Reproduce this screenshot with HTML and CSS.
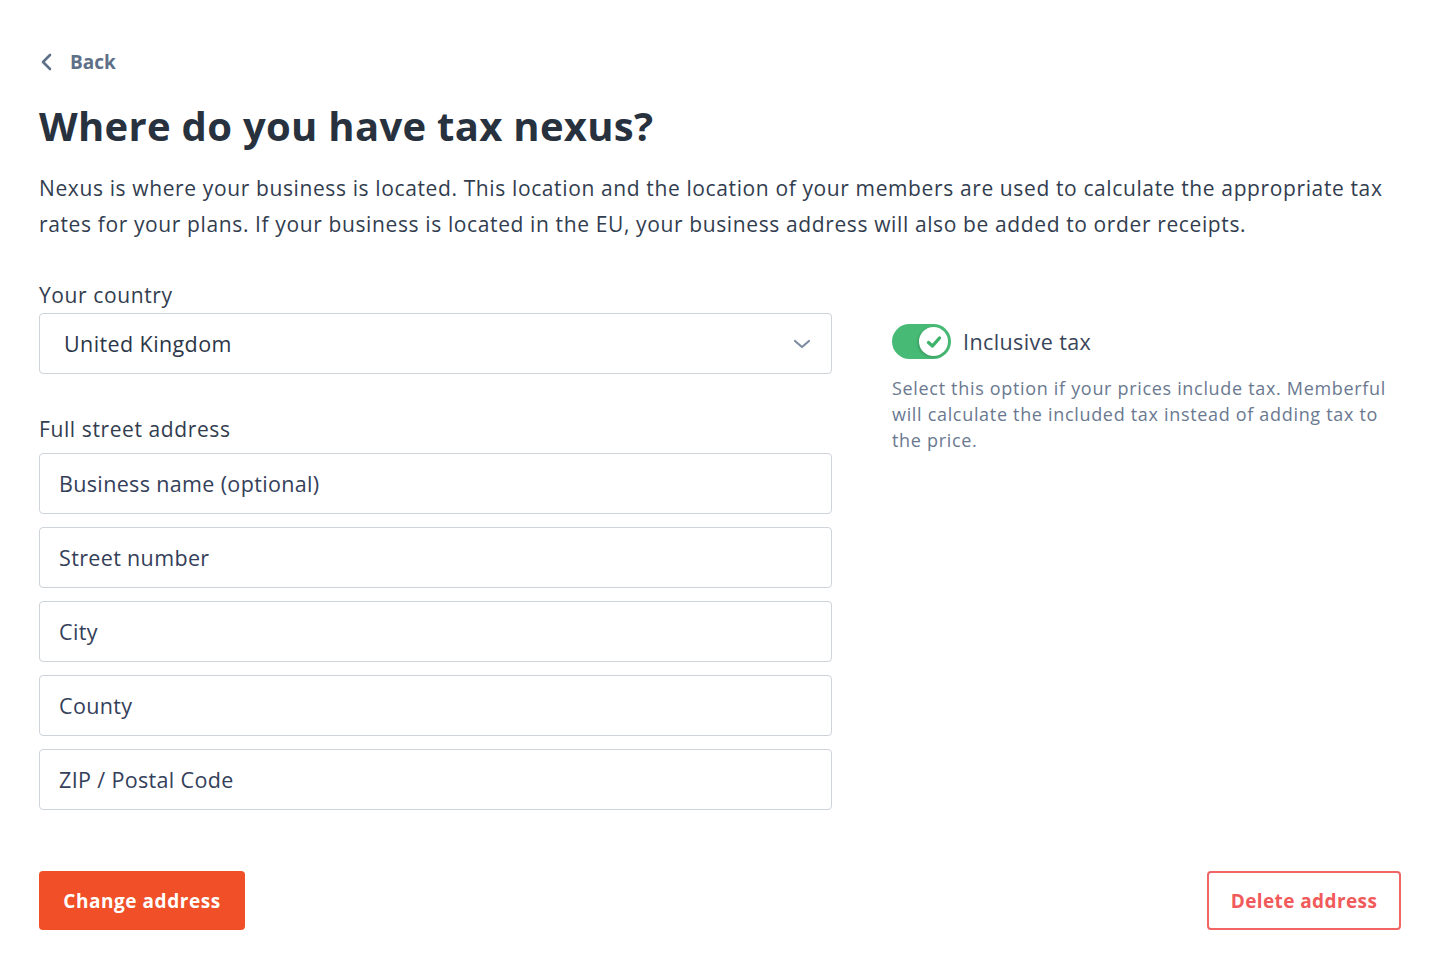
FILE: index.html
```html
<!DOCTYPE html>
<html lang="en">
<head>
<meta charset="utf-8">
<title>Tax nexus</title>
<link rel="stylesheet" href="styles.css">
</head>
<body>
<main class="page">
  <a class="back" href="#">
    <svg class="back-icon" width="14" height="18" viewBox="0 0 14 18"><path d="M10 2 L3 9 L10 16" fill="none" stroke="currentColor" stroke-width="2.6" stroke-linecap="round" stroke-linejoin="round"/></svg>
    <span>Back</span>
  </a>
  <h1 class="title">Where do you have tax nexus?</h1>
  <p class="intro">Nexus is where your business is located. This location and the location of your members are used to calculate the appropriate tax rates for your plans. If your business is located in the EU, your business address will also be added to order receipts.</p>

  <div class="columns">
    <div class="form-col">
      <label class="label">Your country</label>
      <div class="select">
        <span>United Kingdom</span>
        <svg class="chev" width="18" height="12" viewBox="0 0 18 12"><path d="M2 3 L9 9 L16 3" fill="none" stroke="currentColor" stroke-width="2.2" stroke-linecap="round" stroke-linejoin="round"/></svg>
      </div>
      <label class="label label-address">Full street address</label>
      <div class="inputs">
        <div class="input">Business name (optional)</div>
        <div class="input">Street number</div>
        <div class="input">City</div>
        <div class="input">County</div>
        <div class="input">ZIP / Postal Code</div>
      </div>
    </div>
    <div class="side-col">
      <div class="toggle-row">
        <span class="toggle">
          <span class="knob">
            <svg width="18" height="16" viewBox="0 0 18 16"><path d="M3.5 8.5 L7.5 12 L14.5 4" fill="none" stroke="currentColor" stroke-width="3.4" stroke-linecap="round" stroke-linejoin="round"/></svg>
          </span>
        </span>
        <span class="toggle-label">Inclusive tax</span>
      </div>
      <p class="help">Select this option if your prices include tax. Memberful will calculate the included tax instead of adding tax to the price.</p>
    </div>
  </div>

  <div class="actions">
    <button class="btn btn-primary">Change address</button>
    <button class="btn btn-danger">Delete address</button>
  </div>
</main>
</body>
</html>
```

FILE: styles.css
```css
* { box-sizing: border-box; }
html, body { margin: 0; padding: 0; background: #ffffff; }
body {
  font-family: "Open Sans", "Lato", "Liberation Sans", sans-serif;
  color: #2c3648;
}
.page {
  padding: 48px 39px 0 39px;
  width: 1440px;
}
.back {
  display: inline-flex;
  align-items: center;
  gap: 16px;
  color: #5e6f88;
  text-decoration: none;
  font-size: 19px;
  font-weight: 700;
  height: 28px;
  margin-left: 1px;
}
.back-icon { display: block; }
.title {
  margin: 22px 0 0 0;
  font-size: 40px;
  font-weight: 700;
  line-height: 56px;
  color: #28323f;
  letter-spacing: 0.3px;
}
.intro {
  margin: 16px 0 0 0;
  font-size: 21px;
  line-height: 36px;
  color: #323d4f;
  letter-spacing: 0.62px;
  max-width: 1362px;
}
.columns {
  display: flex;
  gap: 60px;
  margin-top: 40px;
}
.form-col {
  width: 793px;
  display: flex;
  flex-direction: column;
}
.label {
  font-size: 21px;
  line-height: 26px;
  color: #323d4f;
  letter-spacing: 0.6px;
  margin-bottom: 5px;
}
.label-address { margin-top: 42px; margin-bottom: 11px; }
.select {
  height: 61px;
  border: 1px solid #cfd4db;
  border-radius: 4px;
  display: flex;
  align-items: center;
  justify-content: space-between;
  padding: 0 20px 0 24px;
  font-size: 21.5px;
  letter-spacing: 0.4px;
  color: #2c3648;
}
.chev { color: #7e8ca3; }
.inputs {
  display: flex;
  flex-direction: column;
  gap: 13px;
}
.input {
  height: 61px;
  border: 1px solid #cfd4db;
  border-radius: 4px;
  display: flex;
  align-items: center;
  padding: 0 19px;
  font-size: 21.5px;
  letter-spacing: 0.35px;
  color: #34405a;
}
.side-col {
  flex: 1;
  padding-top: 42px;
}
.toggle-row {
  display: flex;
  align-items: center;
  gap: 12px;
}
.toggle {
  width: 59px;
  height: 35px;
  border-radius: 18px;
  background: #47bb75;
  display: flex;
  align-items: center;
  justify-content: flex-end;
  padding-right: 3px;
}
.knob {
  width: 29px;
  height: 29px;
  border-radius: 50%;
  background: #ffffff;
  color: #3fb26c;
  display: flex;
  align-items: center;
  justify-content: center;
  box-shadow: -1px 1px 3px rgba(0,0,0,0.2);
}
.toggle-label {
  font-size: 21.5px;
  letter-spacing: 0.4px;
  color: #384459;
}
.help {
  margin: 16px 0 0 0;
  font-size: 18px;
  line-height: 26px;
  letter-spacing: 0.68px;
  color: #6a7990;
  max-width: 505px;
}
.actions {
  display: flex;
  justify-content: space-between;
  margin-top: 61px;
}
.btn {
  font-family: inherit;
  font-size: 19px;
  font-weight: 700;
  height: 59px;
  border-radius: 4px;
  cursor: pointer;
}
.btn-primary {
  width: 206px;
  background: #f04f28;
  color: #ffffff;
  letter-spacing: 0.55px;
  border: none;
}
.btn-danger {
  width: 194px;
  background: #ffffff;
  color: #f15a5a;
  letter-spacing: 0.4px;
  border: 2px solid #f36464;
}
```
